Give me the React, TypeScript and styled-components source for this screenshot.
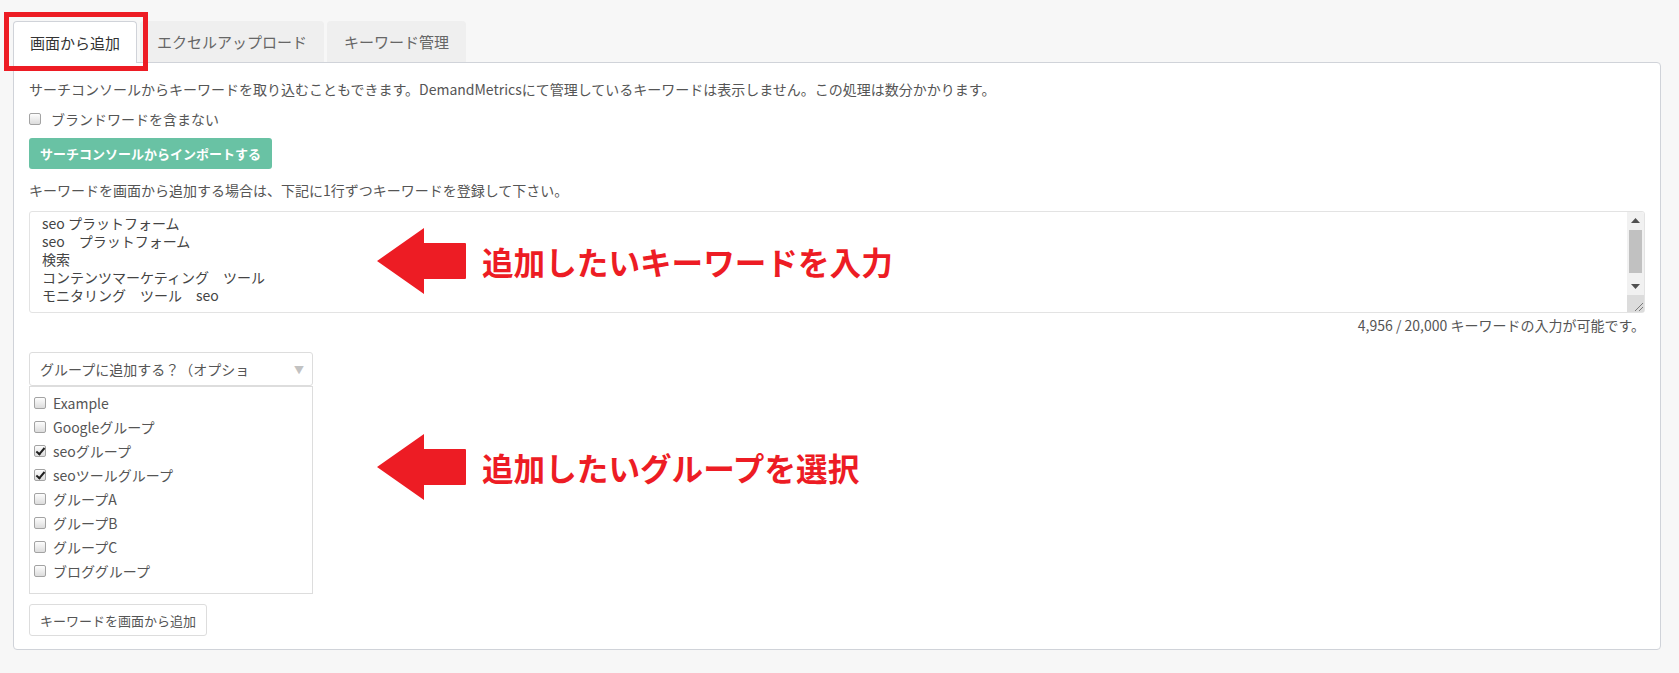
import { useState } from 'react';
import styled, { createGlobalStyle } from 'styled-components';

const GlobalStyle = createGlobalStyle`
  html, body {
    margin: 0;
    padding: 0;
    background: #f7f7f7;
  }
  body {
    font-family: "Noto Sans CJK JP", "Noto Sans", sans-serif;
    color: #555;
  }
`;

const Page = styled.div`
  padding: 21px 18px 23px 13px;
`;

const TabBar = styled.div`
  position: relative;
  display: flex;
  align-items: flex-start;
  gap: 3px;
  height: 41px;
`;

const Tab = styled.button<{ $active?: boolean }>`
  position: relative;
  z-index: 1;
  box-sizing: border-box;
  height: ${(p) => (p.$active ? '42px' : '41px')};
  padding: 0 16px;
  font-family: inherit;
  font-size: 15px;
  line-height: 20px;
  color: ${(p) => (p.$active ? '#333' : '#666')};
  background: ${(p) => (p.$active ? '#fff' : '#efefef')};
  border: 1px solid ${(p) => (p.$active ? '#d0d3d9' : '#efefef')};
  border-bottom: none;
  border-radius: 4px 4px 0 0;
  cursor: pointer;
`;

// 赤枠（注釈）
const Highlight = styled.div`
  position: absolute;
  left: -9px;
  top: -9px;
  width: 144px;
  height: 59px;
  box-sizing: border-box;
  border: 5px solid #ed1c24;
  z-index: 2;
  pointer-events: none;
`;

const Panel = styled.div`
  position: relative;
  background: #fff;
  border: 1px solid #d0d3d9;
  border-radius: 0 4px 4px 4px;
  padding: 16px 15px 13px;
`;

const Note = styled.p<{ $gap?: number }>`
  margin: 0 0 ${(p) => p.$gap ?? 10}px;
  font-size: 14px;
  line-height: 20px;
`;

const CheckRow = styled.label`
  display: flex;
  align-items: center;
  gap: 10px;
  height: 20px;
  margin-bottom: 9px;
  font-size: 14px;
`;

const Check = styled.input.attrs({ type: 'checkbox' })`
  appearance: none;
  position: relative;
  flex: none;
  width: 12px;
  height: 12px;
  margin: 0;
  border: 1px solid #a3a3a3;
  border-radius: 2px;
  background: linear-gradient(#fdfdfd, #dcdcdc);
  box-sizing: border-box;

  &:checked::after {
    content: '';
    position: absolute;
    left: 3px;
    top: 0px;
    width: 3px;
    height: 7px;
    border: solid #1f1f1f;
    border-width: 0 2px 2px 0;
    transform: rotate(40deg);
  }
`;

const ImportButton = styled.button`
  display: block;
  height: 31px;
  padding: 0 11px;
  margin-bottom: 11px;
  font-family: inherit;
  font-size: 13px;
  font-weight: 700;
  color: #fff;
  background: #69c2a4;
  border: none;
  border-radius: 3px;
`;

const AreaWrap = styled.div`
  position: relative;
`;

const KeywordArea = styled.textarea`
  display: block;
  width: 100%;
  height: 102px;
  box-sizing: border-box;
  padding: 2px 30px 2px 12px;
  font-family: inherit;
  font-size: 14px;
  line-height: 18px;
  color: #444;
  border: 1px solid #e3e3e3;
  border-radius: 3px;
  resize: vertical;
  overflow: hidden;
  outline: none;
`;

// スクロールバーの見た目（装飾）
const Rail = styled.div`
  position: absolute;
  top: 1px;
  right: 1px;
  bottom: 1px;
  width: 17px;
  display: flex;
  flex-direction: column;
  background: #f1f1f1;
  border-radius: 0 2px 2px 0;
  pointer-events: none;
`;

const RailButton = styled.div`
  flex: none;
  height: 17px;
  display: flex;
  align-items: center;
  justify-content: center;
`;

const RailTrack = styled.div`
  flex: 1;
  padding: 1px 2px 0;
`;

const Thumb = styled.div`
  height: 43px;
  background: #c1c1c1;
`;

const Corner = styled.div`
  flex: none;
  height: 17px;
  background: #dcdcdc;
  display: flex;
  align-items: flex-end;
  justify-content: flex-end;
`;

const Counter = styled.div`
  margin: 2px 0 17px;
  text-align: right;
  font-size: 14px;
  line-height: 20px;
`;

const GroupBox = styled.div`
  width: 284px;
`;

const SelectBox = styled.div`
  display: flex;
  align-items: center;
  justify-content: space-between;
  box-sizing: border-box;
  height: 34px;
  padding: 0 8px 0 10px;
  font-size: 14px;
  border: 1px solid #ddd;
  border-radius: 3px;
`;

const Caret = styled.span`
  color: #c2c2c2;
  font-size: 10px;
`;

const GroupList = styled.div`
  box-sizing: border-box;
  height: 208px;
  padding: 4px 0 0 4px;
  border: 1px solid #ddd;
`;

const GroupItem = styled.label`
  display: flex;
  align-items: center;
  gap: 7px;
  height: 24px;
  font-size: 14px;
`;

const SubmitButton = styled.button`
  display: block;
  height: 32px;
  margin-top: 10px;
  padding: 0 10px;
  font-family: inherit;
  font-size: 13px;
  color: #555;
  background: #fff;
  border: 1px solid #ddd;
  border-radius: 3px;
`;

const Callout = styled.div<{ $top: number }>`
  position: absolute;
  left: 363px;
  top: ${(p) => p.$top}px;
  display: flex;
  align-items: center;
  gap: 16px;
  pointer-events: none;
`;

const CalloutText = styled.span`
  font-size: 31.6px;
  line-height: 40px;
  font-weight: 700;
  color: #ed1c24;
  white-space: nowrap;
`;

const Arrow = () => (
  <svg width="89" height="66" viewBox="0 0 89 66">
    <path
      d="M0 33 L47 0 L47 15 L88 15 Q89 15 89 16 L89 50 Q89 51 88 51 L47 51 L47 66 Z"
      fill="#ed1c24"
    />
  </svg>
);

const tabs = ['画面から追加', 'エクセルアップロード', 'キーワード管理'];

const groups = [
  { name: 'Example', checked: false },
  { name: 'Googleグループ', checked: false },
  { name: 'seoグループ', checked: true },
  { name: 'seoツールグループ', checked: true },
  { name: 'グループA', checked: false },
  { name: 'グループB', checked: false },
  { name: 'グループC', checked: false },
  { name: 'ブロググループ', checked: false },
];

const keywords = [
  'seo プラットフォーム',
  'seo　プラットフォーム',
  '検索',
  'コンテンツマーケティング　ツール',
  'モニタリング　ツール　seo',
];

const App = () => {
  const [tabId, setTabId] = useState(0);

  return (
    <>
      <GlobalStyle />
      <Page>
        <TabBar>
          {tabs.map((name, i) => (
            <Tab key={name} $active={tabId === i} onClick={() => setTabId(i)}>
              {name}
            </Tab>
          ))}
          <Highlight />
        </TabBar>
        <Panel>
          <Note>
            サーチコンソールからキーワードを取り込むこともできます。DemandMetricsにて管理しているキーワードは表示しません。この処理は数分かかります。
          </Note>
          <CheckRow>
            <Check />
            ブランドワードを含まない
          </CheckRow>
          <ImportButton>サーチコンソールからインポートする</ImportButton>
          <Note $gap={11}>キーワードを画面から追加する場合は、下記に1行ずつキーワードを登録して下さい。</Note>
          <AreaWrap>
            <KeywordArea defaultValue={keywords.join('\n')} />
            <Rail>
              <RailButton>
                <svg width="9" height="5" viewBox="0 0 9 5">
                  <path d="M0 5 L4.5 0 L9 5 Z" fill="#505050" />
                </svg>
              </RailButton>
              <RailTrack>
                <Thumb />
              </RailTrack>
              <RailButton>
                <svg width="9" height="5" viewBox="0 0 9 5">
                  <path d="M0 0 L4.5 5 L9 0 Z" fill="#505050" />
                </svg>
              </RailButton>
              <Corner>
                <svg width="12" height="12" viewBox="0 0 12 12">
                  <path d="M11 3 L3 11 M11 7 L7 11" stroke="#7a7a7a" strokeWidth="1" />
                </svg>
              </Corner>
            </Rail>
          </AreaWrap>
          <Counter>4,956 / 20,000 キーワードの入力が可能です。</Counter>
          <GroupBox>
            <SelectBox>
              グループに追加する？（オプショ
              <Caret>▼</Caret>
            </SelectBox>
            <GroupList>
              {groups.map((g) => (
                <GroupItem key={g.name}>
                  <Check defaultChecked={g.checked} />
                  {g.name}
                </GroupItem>
              ))}
            </GroupList>
          </GroupBox>
          <SubmitButton>キーワードを画面から追加</SubmitButton>

          <Callout $top={165}>
            <Arrow />
            <CalloutText>追加したいキーワードを入力</CalloutText>
          </Callout>
          <Callout $top={371}>
            <Arrow />
            <CalloutText>追加したいグループを選択</CalloutText>
          </Callout>
        </Panel>
      </Page>
    </>
  );
};

export default App;
